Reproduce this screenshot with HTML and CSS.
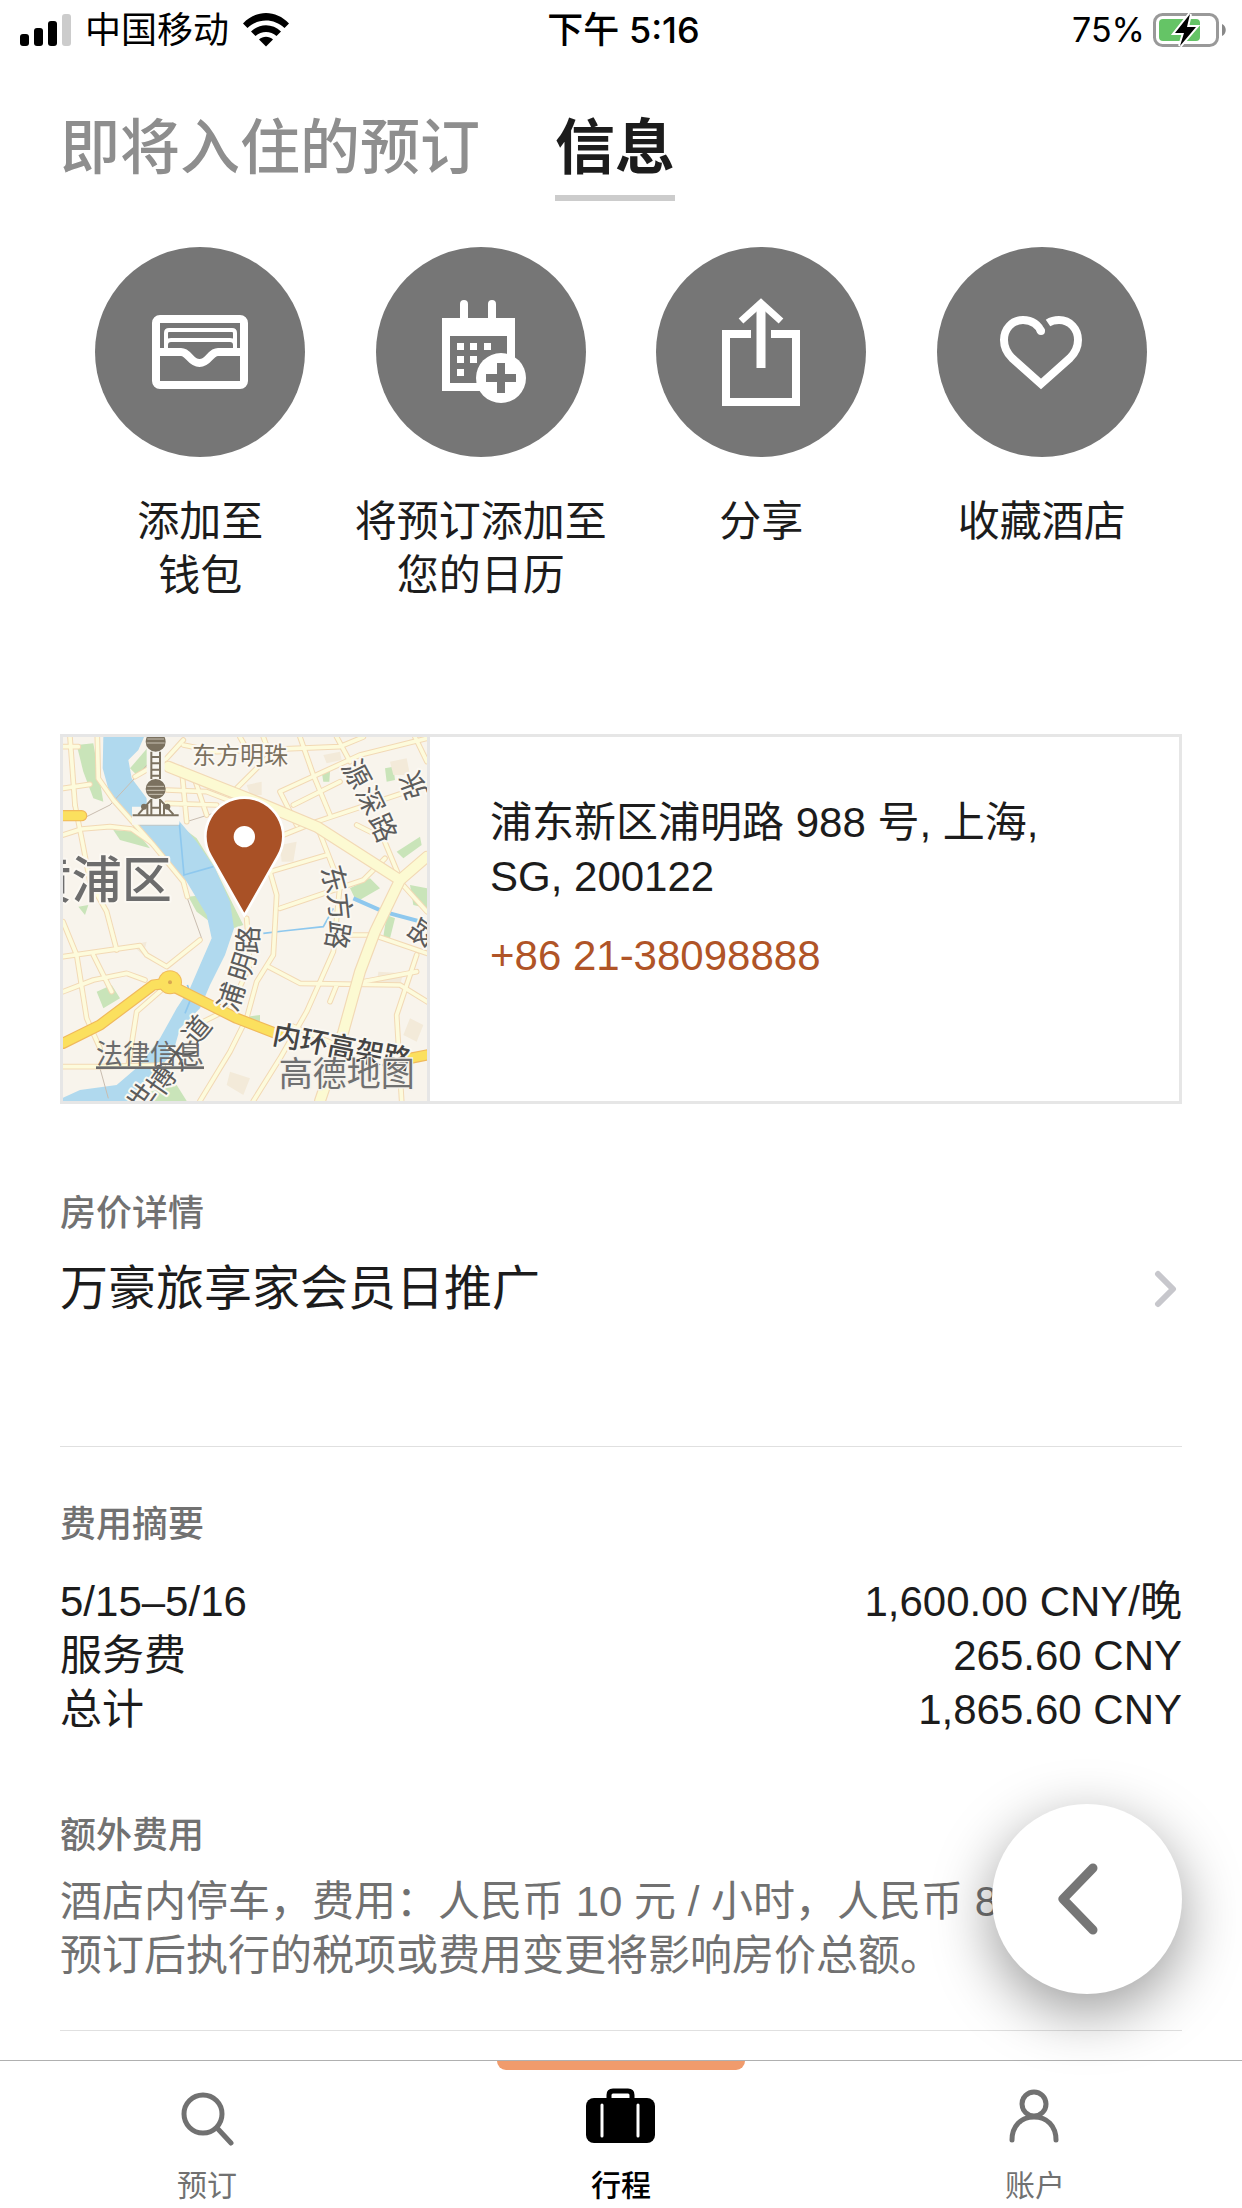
FILE: index.html
```html
<!DOCTYPE html>
<html lang="zh-CN">
<head>
    <meta charset="UTF-8">
    <meta name="viewport" content="width=device-width, initial-scale=1.0">
    <title>信息</title>
    <link rel="stylesheet" href="styles.css">
</head>
<body>
    <header class="status-bar">
        <div class="status-left">
            <svg class="signal" width="51" height="32" viewBox="0 0 51 32">
                <rect x="0" y="20" width="9" height="12" rx="3"/>
                <rect x="14" y="14" width="9" height="18" rx="3"/>
                <rect x="28" y="7" width="9" height="25" rx="3"/>
                <rect x="42" y="0" width="9" height="32" rx="3" fill="#ccc"/>
            </svg>
            <span>中国移动</span>
            <svg class="wifi" width="46" height="34" viewBox="0 0 46 34">
                <path d="M0 10.5C13-3.500 33-3.500 46 10.500L41.500 15C31 5 15 5 4.500 15Z"/>
                <path d="M8 18.500C16.500 10 29.500 10 38 18.500L33.500 23C27.500 17.500 18.500 17.500 12.500 23Z"/>
                <path d="M16 26.500C20 22.800 26 22.800 30 26.500L23 33.500Z"/>
            </svg>
        </div>
        <div class="status-time">下午 5:16</div>
        <div class="status-right">
            <span>75%</span>
            <svg width="74" height="36" viewBox="0 0 74 36">
                <rect x="1.500" y="2.500" width="63" height="31" rx="8" fill="none" stroke="#999" stroke-width="3"/>
                <path d="M69 12C74 14 74 22 69 24Z" fill="#888"/>
                <rect x="6" y="7" width="41" height="22" rx="4" fill="#65c466"/>
                <path d="M37 2L22 21H31L27 34L43 15H34Z" stroke="#fff" stroke-width="4" paint-order="stroke"/>
            </svg>
        </div>
    </header>

    <nav class="tabs">
        <button class="tab">即将入住的预订</button>
        <button class="tab active">信息</button>
    </nav>

    <main>
        <section class="actions">
            <button class="action">
                <svg class="circle" viewBox="0 0 210 210">
                    <rect x="61" y="72" width="88" height="66" rx="4"/>
                    <path d="M65 105H86C94 105 95 116 104.500 116C114 116 115 105 123 105H145"/>
                    <path d="M71 104V86Q71 83 74 83H137Q140 83 140 86V104M71 98Q71 93 76 93H135Q140 93 140 98" stroke-width="4"/>
                </svg>
                <span>添加至<br>钱包</span>
            </button>
            <button class="action">
                <svg class="circle" viewBox="0 0 210 210">
                    <path d="M88 57V75M116 57V75" stroke-linecap="round"/>
                    <path class="solid" fill-rule="evenodd" d="M66 71H139V144H66ZM74 89V136H131V89Z"/>
                    <path class="solid" d="M81 96h7v7h-7zM94 96h7v7h-7zM108 96h7v7h-7zM81 109h7v7h-7zM94 109h7v7h-7zM81 122h7v7h-7z"/>
                    <circle class="solid" cx="125" cy="131" r="25"/>
                    <path class="plus" d="M125 116V146M110 131H140"/>
                </svg>
                <span>将预订添加至<br>您的日历</span>
            </button>
            <button class="action">
                <svg class="circle" viewBox="0 0 210 210">
                    <path d="M95 87H70V155H140V87H115"/>
                    <path d="M105 56V121" stroke-width="9"/>
                    <path d="M85 74L105 56L125 74" stroke-width="7"/>
                </svg>
                <span>分享</span>
            </button>
            <button class="action">
                <svg class="circle" viewBox="0 0 210 210">
                    <path d="M104 85C102 78 95 73 86 73C75 73 67 82 67 93C67 101 70 106 75 111L104 137L133 111C138 106 141 101 141 93C141 82 133 73 122 73C118 73 114 74 111 76"/>
                    <circle class="solid" cx="104" cy="84" r="4"/>
                </svg>
                <span>收藏酒店</span>
            </button>
        </section>

        <section class="hotel">
            <svg class="map" viewBox="39 36 1092 1092">
                <defs>
                    <g id="minor">
                        <path d="M142 36L145 160L190 225L310 360L400 470L412 515"/>
                        <path d="M39 330L95 312L180 305L245 312L300 350"/>
                        <path d="M75 240L95 340L120 470L170 560L200 675"/>
                        <path d="M39 65H85M39 190L120 178M60 36L75 240"/>
                        <path d="M39 695L270 662L290 690L350 725L450 645"/>
                        <path d="M39 590L80 690L110 880L150 970"/>
                        <path d="M39 800L130 765L230 745L285 765M130 690L185 800"/>
                        <path d="M39 1025H150L340 1020M340 790L260 860L235 1020"/>
                        <path d="M255 155L350 100L400 45M350 195L470 200L600 250"/>
                        <path d="M395 130L410 290M430 150L470 270M350 235L500 240"/>
                        <path d="M400 60L500 80L870 65L940 36"/>
                        <path d="M570 36L600 90M640 36L660 90L560 190"/>
                        <path d="M750 36L790 150L840 270M860 36L900 110"/>
                        <path d="M690 200L930 90L1131 40M690 200L740 300"/>
                        <path d="M700 330L800 290L1131 180M730 240L870 170"/>
                        <path d="M800 300L870 480L850 680L770 860L690 1000L610 1128"/>
                        <path d="M660 440L830 390M690 550L940 465L1005 400"/>
                        <path d="M660 440L680 510L670 690L620 770L590 880"/>
                        <path d="M655 725L750 775L1050 780L1131 830M860 780L840 830"/>
                        <path d="M900 630H970L1131 685M1100 690L1040 870L1055 1128"/>
                        <path d="M940 770L1100 740M720 900L860 960"/>
                        <path d="M590 580L600 720L540 850L440 900"/>
                        <path d="M590 880L540 980L450 1128M1095 36L1131 110"/>
                        <path d="M1050 470L1131 560M1000 340L1050 460M920 300L1000 340"/>
                    </g>
                    <g id="major">
                        <path d="M355 125L480 175L620 230L800 305L1050 465"/>
                        <path d="M1131 395L1050 465L975 620L930 740L880 920L810 1128"/>
                    </g>
                    <g id="highway">
                        <path d="M39 272H95"/>
                        <path d="M39 955L150 900L310 780L350 775L560 880L690 930"/>
                        <path d="M1080 1000L1131 990"/>
                    </g>
                </defs>
                <rect x="39" y="36" width="1092" height="1092" fill="#f8f4ec"/>
                <g fill="#c9e4b9">
                    <path d="M80 60L130 55L160 230L130 220L100 140Z"/>
                    <path d="M190 315L260 320L300 370L210 345Z"/>
                    <path d="M240 130L300 60L330 110L260 150Z"/>
                    <path d="M400 310L440 340L490 420L560 560L580 600L550 610L510 480Z"/>
                    <path d="M415 515L460 510L480 590L440 560Z"/>
                    <path d="M815 140L840 140L838 170L820 170Z"/>
                    <path d="M900 490L960 460L990 490L920 530Z"/>
                    <path d="M1040 380L1110 335L1115 360L1060 400Z"/>
                    <path d="M1080 480L1131 490V550L1090 540ZM1010 570L1035 580L1020 640L1000 635Z"/>
                    <path d="M140 800L185 780L210 820L160 850ZM590 875L630 870V890L590 890Z"/>
                    <path d="M1005 130L1030 125L1035 165L1010 170ZM85 545L115 540L105 570Z"/>
                    <path d="M300 1100L380 1080L410 1128H290Z"/>
                </g>
                <g fill="#f3ead9">
                    <path d="M1020 110L1070 100L1080 150L1030 150ZM590 180L635 170V210L600 210Z"/>
                    <path d="M820 90L870 80L875 105L830 115ZM985 740L1060 745L1050 780L980 780Z"/>
                    <path d="M1080 880L1120 900L1100 950L1060 930ZM245 660L290 650L280 690Z"/>
                    <path d="M540 1040L600 1060L580 1110L530 1080ZM690 360L740 350L730 410L695 410Z"/>
                </g>
                <path fill="#b0d9ee" d="M160 36H282L265 75L235 105L245 160L290 220L330 285H385L440 350L495 430L540 530L552 610L525 690L480 780L450 850L390 910L370 980L320 1040L240 1128H39V1118L90 1095L200 1080L270 1020L330 940L380 850L420 790L450 720L485 640L470 570L410 470L330 390L250 290L180 210L158 130Z"/>
                <g fill="none" stroke="#8ec8ee" stroke-width="5">
                    <path d="M388 295L402 450L490 425M640 625L700 618L820 605L850 550"/>
                    <path d="M910 520L1000 560L1131 595" stroke-width="12"/>
                    <path d="M412 780L425 815L405 865"/>
                </g>
                <g fill="none" stroke="#c9bdb0" stroke-width="3">
                    <path d="M110 275L180 240L300 110M250 300L385 300M412 520L455 640M150 1030L175 1120M410 290L490 265"/>
                </g>
                <use href="#minor" class="road road-edge"/>
                <use href="#minor" class="road road-fill"/>
                <use href="#major" class="road major-edge"/>
                <use href="#major" class="road major-fill"/>
                <use href="#highway" class="road highway-edge"/>
                <circle cx="360" cy="772" r="36" fill="#f0b95c"/>
                <use href="#highway" class="road highway-fill"/>
                <circle cx="360" cy="772" r="33" fill="#fbe05e"/>
                <circle cx="360" cy="772" r="6" fill="#d9a750"/>

                <!-- tower -->
                <path d="M317 36V272M246 272H388" fill="none" stroke="#f8f6f0" stroke-width="54"/>
                <g class="tower">
                    <circle cx="317" cy="50" r="27"/>
                    <circle cx="317" cy="192" r="27"/>
                    <path d="M304 80V162M330 80V162M304 96H330M304 115H330M304 134H330M304 152H330M304 222V270M330 222V270M248 271H386M304 224L265 268M330 224L370 268M304 248H330M292 240V270M342 240V270"/>
                    <circle cx="282" cy="245" r="6"/>
                    <circle cx="352" cy="245" r="6"/>
                    <path d="M292 42H342M290 54H344M292 184H342M290 196H344M296 208H338" stroke="#c9c2b4" stroke-width="3"/>
                </g>

                <g class="map-text" font-size="84">
                    <text x="426" y="118" font-size="72" fill="#7b715f">东方明珠</text>
                    <text x="-85" y="520" font-size="150" font-weight="500" fill="#6d6d6d">黄浦区</text>
                    <g text-anchor="middle">
                        <text transform="translate(920 146) rotate(62)" y="31">源</text>
                        <text transform="translate(962 226) rotate(64)" y="31">深</text>
                        <text transform="translate(1000 308) rotate(66)" y="31">路</text>
                        <text transform="translate(1090 182) rotate(-110)" y="31">张</text>
                        <text transform="translate(853 462) rotate(75)" y="31">东</text>
                        <text transform="translate(870 545) rotate(84)" y="31">方</text>
                        <text transform="translate(864 632) rotate(100)" y="31">路</text>
                        <text transform="translate(1118 625) rotate(125)" y="31">路</text>
                        <text transform="translate(594 645) rotate(-88)" y="31">路</text>
                        <text transform="translate(576 725) rotate(-72)" y="31">明</text>
                        <text transform="translate(543 815) rotate(-72)" y="31">浦</text>
                        <text transform="translate(440 915) rotate(-50)" y="31">道</text>
                        <text transform="translate(388 990) rotate(-55)" y="31">大</text>
                        <text transform="translate(335 1065) rotate(-55)" y="31">博</text>
                        <text transform="translate(274 1118) rotate(-55)" y="31">世</text>
                    </g>
                    <text transform="translate(664 956) rotate(11)" font-weight="500" fill="#444">内环高架路</text>
                </g>
                <a href="#legal">
                    <text class="legal" x="138" y="1018" font-size="81">法律信息</text>
                </a>
                <text class="amap" x="686" y="1084" font-size="102">高德地图</text>

                <path d="M583 563L485 391A113 113 0 1 1 681 391Z" fill="#a95126" stroke="#fff" stroke-width="16" paint-order="stroke"/>
                <circle cx="583" cy="335" r="32" fill="#fff"/>
            </svg>
            <address class="address">
                <p>浦东新区浦明路 988 号, 上海,<br>SG, 200122</p>
                <a class="phone" href="tel:+862138098888">+86 21-38098888</a>
            </address>
        </section>

        <section class="rate">
            <h2>房价详情</h2>
            <a class="rate-link" href="#rate">
                <span>万豪旅享家会员日推广</span>
                <svg width="24" height="40" viewBox="0 0 24 40">
                    <path d="M4 5L19 20L4 35"/>
                </svg>
            </a>
        </section>

        <section class="summary">
            <h2>费用摘要</h2>
            <table>
                <tr><th scope="row">5/15–5/16</th><td>1,600.00 CNY/晚</td></tr>
                <tr><th scope="row">服务费</th><td>265.60 CNY</td></tr>
                <tr><th scope="row">总计</th><td>1,865.60 CNY</td></tr>
            </table>
            <h2>额外费用</h2>
            <p class="note">酒店内停车，费用：人民币 10 元 / 小时，人民币 80<br>预订后执行的税项或费用变更将影响房价总额。</p>
        </section>
    </main>

    <button class="back" aria-label="返回">
        <svg width="60" height="80" viewBox="0 0 60 80">
            <path d="M36 9L6 40L36 71"/>
        </svg>
    </button>

    <nav class="bottom-nav">
        <a href="#book">
            <svg width="72" height="60" viewBox="0 0 72 60">
                <circle cx="32" cy="28" r="19"/>
                <path d="M47 43L60 57"/>
            </svg>
            <span>预订</span>
        </a>
        <a href="#trips" class="active">
            <svg width="72" height="60" viewBox="0 0 72 60">
                <rect class="bag" x="1" y="12" width="69" height="45" rx="8"/>
                <path d="M24 14V9Q24 5 28 5H43Q47 5 47 9V14"/>
                <path class="strap" d="M17 19V50M53 19V50"/>
            </svg>
            <span>行程</span>
        </a>
        <a href="#account">
            <svg width="72" height="60" viewBox="0 0 72 60">
                <circle cx="35" cy="18" r="12"/>
                <path d="M13 54C13 40 22 31 35 31S57 40 57 54"/>
            </svg>
            <span>账户</span>
        </a>
    </nav>
</body>
</html>
```
FILE: styles.css
```css
* {
    box-sizing: border-box;
}

body {
    margin: 0;
    padding-bottom: 177px;
    background-color: #fff;
    color: #1c1c1c;
    font-family: "Liberation Sans", "Noto Sans CJK SC", sans-serif;
    font-size: 42px;
    line-height: 54px;
}

button {
    padding: 0;
    border: none;
    background: none;
    color: inherit;
    font: inherit;
    cursor: pointer;
}

a {
    color: inherit;
    text-decoration: none;
}

h2 {
    margin: 0;
    color: #717171;
    font-size: 36px;
    font-weight: 500;
    line-height: 48px;
}

/* status bar */
.status-bar {
    display: grid;
    grid-template-columns: 1fr auto 1fr;
    align-items: center;
    height: 60px;
    padding: 0 15px 0 20px;
    color: #000;
    font-family: Inter, "Noto Sans CJK SC", sans-serif;
    font-size: 36px;
    line-height: 48px;
}

.status-left,
.status-right {
    display: flex;
    align-items: center;
    gap: 14px;
}

.status-right {
    justify-content: flex-end;
    gap: 8px;
    font-size: 34px;
}

.status-time {
    font-weight: 500;
}

/* tabs */
.tabs {
    display: flex;
    gap: 75px;
    margin: 47px 60px 46px;
}

.tab {
    padding-bottom: 4px;
    border-bottom: 6px solid transparent;
    color: #8e8e8e;
    font-size: 60px;
    font-weight: 500;
    line-height: 84px;
}

.tab.active {
    border-color: #ccc;
    color: #1c1c1c;
    font-weight: bold;
}

main {
    margin: 0 60px;
}

/* action buttons */
.actions {
    display: grid;
    grid-template-columns: repeat(4, 1fr);
}

.action {
    display: flex;
    flex-direction: column;
    align-items: center;
    gap: 38px;
    white-space: nowrap;
}

.circle {
    width: 210px;
    height: 210px;
    border-radius: 50%;
    background-color: #767676;
    fill: none;
    stroke: #fff;
    stroke-width: 8;
}

.circle .solid {
    fill: #fff;
    stroke: none;
}

.circle .plus {
    stroke: #767676;
}

/* hotel card */
.hotel {
    display: flex;
    margin-top: 131px;
    border: 3px solid #e6e6e6;
}

.map {
    flex: none;
    width: 364px;
    height: 364px;
    overflow: hidden;
}

.address {
    flex: 1;
    padding: 59px 60px;
    border-left: 3px solid #e6e6e6;
    font-style: normal;
}

.address p {
    margin: 0 0 25px;
}

.phone {
    color: #b05427;
}

.road {
    fill: none;
    stroke-linejoin: round;
    stroke-linecap: round;
}

.road-edge {
    stroke: #f2d9b5;
    stroke-width: 17;
}

.road-fill {
    stroke: #fdfbdc;
    stroke-width: 11;
}

.major-edge {
    stroke: #f2d9b5;
    stroke-width: 36;
}

.major-fill {
    stroke: #fcfad2;
    stroke-width: 29;
}

.highway-edge {
    stroke: #f0b95c;
    stroke-width: 34;
}

.highway-fill {
    stroke: #fbe05e;
    stroke-width: 27;
}

.tower {
    fill: #7b715f;
    stroke: #7b715f;
    stroke-width: 6;
}

.map-text {
    fill: #5c5c5c;
    font-family: "Noto Sans CJK SC", sans-serif;
    stroke: #fbf8f2;
    stroke-width: 12;
    stroke-linejoin: round;
    paint-order: stroke;
}

.legal {
    fill: #6b6b6b;
    font-family: "Noto Sans CJK SC", sans-serif;
    text-decoration: underline;
}

.amap {
    fill: #707070;
    font-family: "Noto Sans CJK SC", sans-serif;
    stroke: #f5f2ec;
    stroke-width: 8;
    paint-order: stroke;
}

/* room rate */
.rate {
    padding: 86px 0 127px;
    border-bottom: 1px solid #e0e0e0;
}

.rate-link {
    display: flex;
    justify-content: space-between;
    align-items: center;
    margin-top: 21px;
    padding-right: 4px;
    font-size: 48px;
    line-height: 60px;
}

.rate-link path {
    fill: none;
    stroke: #c7c7cc;
    stroke-width: 6;
    stroke-linecap: round;
    stroke-linejoin: round;
}

/* summary of charges */
.summary {
    padding: 54px 0 47px;
    border-bottom: 1px solid #e0e0e0;
}

.summary table {
    width: 100%;
    margin: 26px 0 75px;
    border-collapse: collapse;
}

.summary th,
.summary td {
    padding: 0;
    font-weight: normal;
    text-align: left;
}

.summary td {
    text-align: right;
}

.note {
    margin: 15px 0 0;
    color: #717171;
    white-space: nowrap;
}

/* floating back button */
.back {
    position: fixed;
    right: 60px;
    bottom: 214px;
    z-index: 2;
    display: flex;
    justify-content: center;
    align-items: center;
    width: 190px;
    height: 190px;
    border-radius: 50%;
    background-color: #fff;
    box-shadow: 0 18px 60px rgba(0, 0, 0, 0.4);
}

.back path {
    fill: none;
    stroke: #767676;
    stroke-width: 9;
    stroke-linecap: round;
    stroke-linejoin: round;
}

/* bottom navigation */
.bottom-nav {
    position: fixed;
    right: 0;
    bottom: 0;
    left: 0;
    display: grid;
    grid-template-columns: repeat(3, 1fr);
    height: 148px;
    border-top: 1px solid #b0b0b0;
    background-color: #fff;
}

.bottom-nav a {
    position: relative;
    display: flex;
    flex-direction: column;
    align-items: center;
    gap: 20px;
    padding-top: 25px;
    color: #717171;
    font-size: 30px;
    line-height: 40px;
}

.bottom-nav a.active {
    color: #000;
    font-weight: 500;
}

.bottom-nav a.active::before {
    content: "";
    position: absolute;
    top: 0;
    left: 20%;
    width: 60%;
    height: 9px;
    border-radius: 0 0 9px 9px;
    background-color: #f09b6c;
}

.bottom-nav svg {
    fill: none;
    stroke: currentColor;
    stroke-width: 5;
    stroke-linecap: round;
}

.bottom-nav .bag {
    fill: currentColor;
    stroke: none;
}

.bottom-nav .strap {
    stroke: #fff;
    stroke-width: 3;
}
```
